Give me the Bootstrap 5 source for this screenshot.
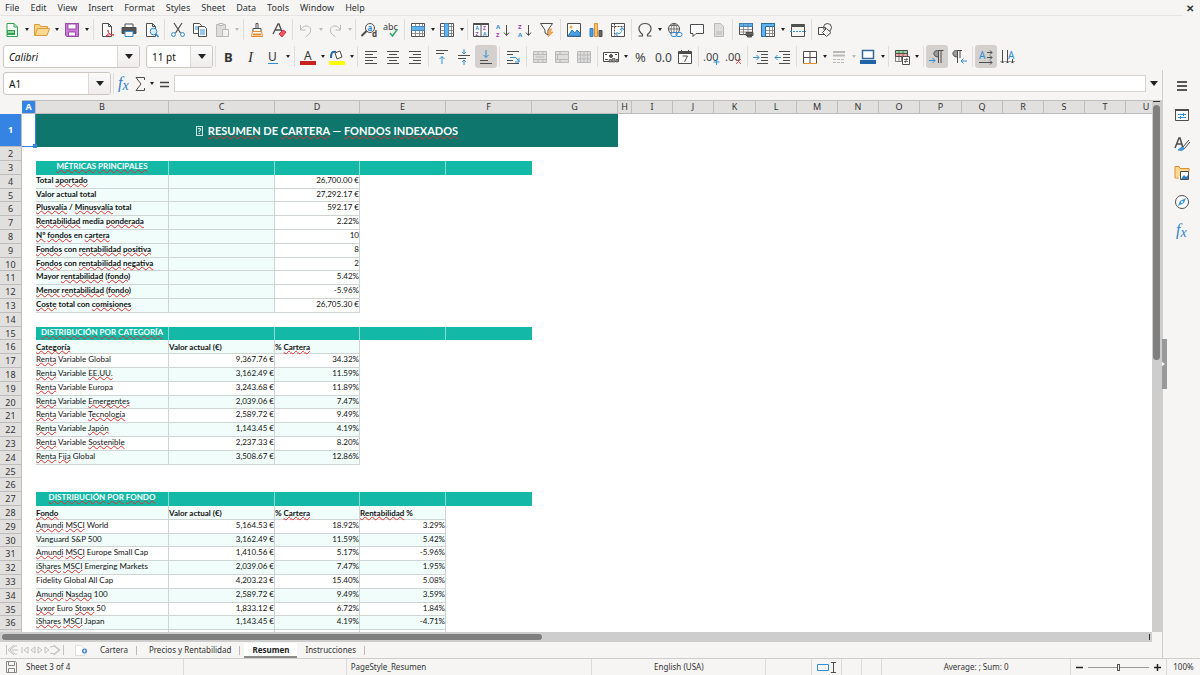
<!DOCTYPE html>
<html lang="en">
<head>
<meta charset="utf-8">
<meta name="viewport" content="width=device-width, initial-scale=1">
<title>Spreadsheet – Resumen</title>
<link href="https://cdn.jsdelivr.net/npm/bootstrap@5.3.0/dist/css/bootstrap.min.css" rel="stylesheet">
<style>
:root{--ui:#f6f5f4;--line:#d5d3d1;--ink:#2e3436;--mint:#f0fdfa;--teal:#14b8a6}
body{font:8px/14px "Noto Sans",sans-serif;background:var(--ui);color:var(--ink);height:100vh;overflow:hidden}
button{border:0;background:none;padding:0;color:inherit;font:inherit}
svg{display:block;fill:none;stroke:#4d4d4d;stroke-width:1;flex:none;overflow:visible}
.menubar{font-size:9px;height:16px;border-bottom:1px solid #e6e4e2;margin-right:17px;padding-left:5px;gap:11px}
.menubar a{color:var(--ink);text-decoration:none}
.close-x{top:1px;right:6px;font-weight:700;font-size:10px}
.tools{height:27px;padding-left:1px}
.tools svg,.side svg{width:16px;height:16px}
.tb{width:22px;height:23px;display:flex;align-items:center;justify-content:center;border-radius:3px;flex:none}
.slim .tb{width:16px}
.tb.on{background:#d3d0cd}
.dd{width:8px;height:23px;display:flex;align-items:center;justify-content:center;flex:none}
.dd.tight{width:7px}
.dd::before,.pick::before{content:"";border:2px solid transparent;border-top:3px solid #222;border-bottom:0}
.dd.off::before{border-top-color:#bbb}
.pick::before{border-width:5px 4px 0}
.sep{width:1px;height:21px;background:#e0dedc;margin:0 2px;flex:none}
.combo{height:23px;border:1px solid #cdc7c2;border-radius:3px;background:#fff;flex:none;overflow:hidden}
.combo input{border:0;padding:0 5px;min-width:0;flex:1;outline:0;background:none;color:#111;font-size:10px}
.combo .pick{width:22px;border-left:1px solid #dcd8d4;background:linear-gradient(#fbfafa,#eeedec)}
.pick{display:flex;align-items:center;justify-content:center}
.w-font{width:137px;margin-left:2px;margin-right:6px}.w-size{width:67px}.w-name{width:108px;margin-left:2px}
.formula{height:17px;border:1px solid #d8d4d0;background:#fff;min-width:0;outline:0;margin-left:2px}
.sheet{min-width:0;min-height:0}
.board{margin-top:3px}
.cells{background:#fff;overflow:hidden;min-height:0;min-width:0}
.gridt{table-layout:fixed;border-collapse:separate;border-spacing:0;width:1167px;font-family:Lato,sans-serif;font-size:8px;line-height:12px;color:#111}
.gridt th,.gridt td{padding:0;white-space:nowrap;height:14px;vertical-align:middle}
.gridt tbody td{line-height:11px;vertical-align:top}
.gridt tbody tr:nth-child(5n) :is(th,td){height:13px;line-height:11px}
.gridt tbody tr:first-child :is(th,td){height:33px;vertical-align:middle}
.gridt thead th,.gridt tbody th{font:400 8px/12px "Noto Sans",sans-serif;color:#333;background:#e1e0df;text-align:center;border:0 solid #bfbdbb;border-width:0 1px 1px 0}
.gridt thead th{border-top:1px solid #bfbdbb;font-size:9px}
.gridt tbody th{font-size:9px}
.gridt thead th:first-child{background:var(--ui);border-color:var(--ui)}
.gridt .cur{background:#3584e4!important;color:#fff!important;font-weight:700!important}
.gridt .bx{border:0 solid #cfd5d5;border-width:0 1px 1px 0}
.gridt .mint{background:var(--mint)}
.gridt .sect{background:var(--teal);color:#fff;font-weight:700;text-align:center;border:0 solid #8adcd3;border-width:0 1px 0 0}
.gridt .sect.end{border:0}
.gridt .ttl{background:#0f766e;color:#fff;font-weight:700;font-size:11px;line-height:16px;text-align:center}
.gridt .num{text-align:right}
.gridt tbody .low{vertical-align:bottom}
.a1{border:solid #3584e4;border-width:0 1px 1px 0!important;position:relative}
.a1::after{content:"";position:absolute;right:-2px;bottom:-2px;width:4px;height:4px;background:#3584e4}
.sp{text-decoration:underline wavy #e03030 1px;text-underline-offset:0;text-decoration-skip-ink:none}
.tofu{border:1px solid #cfe4e2;font-size:8px;line-height:8px;display:inline-block;width:7px;margin-right:5px;vertical-align:1px}
.vbar{width:10px;background:#cdcdcd;padding:1px 2px 0 1px}
.vbar i{display:block;background:#7f7f7f;border-radius:4px;height:48%;margin-top:3px}
.vbar b{display:block;height:1px;background:#333}
.hbar{height:10px;background:#cdcdcd;padding:2px;margin-right:10px}
.hbar i{width:47%;height:6px;background:#7f7f7f;border-radius:3px}
.hbar b{width:1px;height:6px;background:#333}
.side{width:38px;border-left:1px solid #d0cecc;position:relative}
.side .rail{gap:6px;padding-top:4px}
.grip{position:absolute;left:-1px;top:50%;width:5px;height:50px;margin-top:-25px;background:#999;display:flex;align-items:center}
.grip::before{content:"";border:2px solid transparent;border-left:3px solid #fff;border-right:0}
.tabs{height:16px}
.tabs a{color:#333;text-decoration:none;height:15px}
.tabs .cut{width:1px;height:9px;background:#bbb}
.tabs .act{background:#fff;font-weight:700;border-bottom:2px solid #8b8b8b;padding:0 8px;color:#222}
.status{height:17px;border-top:1px solid #cfcdcb;display:grid;grid-template-columns:184fr 163fr 246fr 174fr 46fr 30px 20px 20px 189fr 96px 33px;color:#333}
.status>div{border-right:1px solid #dddbd9;display:flex;align-items:center;min-width:0;white-space:nowrap}
.status>div:last-child{border:0}
.zoomer{appearance:none;flex:1;min-width:0;height:10px;background:linear-gradient(#999,#999) center/100% 1px no-repeat}
.zoomer::-webkit-slider-thumb{appearance:none;width:3px;height:7px;background:#eee;border:1px solid #555}
.bl{stroke:#2f8fd6}.gy{stroke:#b5b5b5}
</style>
<script src="https://cdn.jsdelivr.net/npm/bootstrap@5.3.0/dist/js/bootstrap.bundle.min.js"></script>
</head>
<body class="d-flex flex-column">
<nav class="menubar d-flex align-items-center flex-shrink-0" aria-label="Menu">
<a href="#">File</a><a href="#">Edit</a><a href="#">View</a><a href="#">Insert</a><a href="#">Format</a><a href="#">Styles</a><a href="#">Sheet</a><a href="#">Data</a><a href="#">Tools</a><a href="#">Window</a><a href="#">Help</a>
<button class="close-x position-absolute" aria-label="Close">✕</button>
</nav>
<div class="tools d-flex align-items-center flex-shrink-0" id="bar1"></div>
<div class="tools d-flex align-items-center flex-shrink-0">
<div class="combo w-font d-flex"><input aria-label="Font name" value="Calibri" class="fst-italic"><button class="pick" aria-label="Fonts"></button></div>
<div class="combo w-size d-flex"><input aria-label="Font size" value="11 pt"><button class="pick" aria-label="Sizes"></button></div>
<div class="d-flex align-items-center" id="bar2"></div>
</div>
<div class="d-flex flex-grow-1 sheet">
<main class="d-flex flex-column flex-grow-1 sheet">
<div class="tools d-flex align-items-center flex-shrink-0">
<div class="combo w-name d-flex"><input aria-label="Name box" value="A1"><button class="pick" aria-label="Names"></button></div>
<div class="d-flex align-items-center slim" id="bar3"></div>
<input class="formula flex-grow-1" aria-label="Formula"><button class="pick px-1" aria-label="Expand formula bar"></button>
</div>
<div class="board d-flex flex-grow-1 sheet">
<div class="cells flex-grow-1"><table class="gridt"><colgroup id="cols"></colgroup><thead><tr id="heads"></tr></thead><tbody id="rows"></tbody></table></div>
<div class="vbar"><b></b><i></i></div>
</div>
<div class="hbar d-flex justify-content-between flex-shrink-0"><i></i><b></b></div>
<div class="tabs d-flex align-items-center flex-shrink-0">
<svg width="60" height="12" viewBox="0 0 60 12" class="ms-1 me-2 gy"><path d="M2.500 1v10M13 2h-2L6 6l5 4h2M4 6l6-5M4 6l6 5M8 6h6M18 3v6M24 3l-4 3 4 3zM31 3l-4 3 4 3zM34 3l4 3-4 3zM41 3l4 3-4 3zM50 1l6 5-6 5M46 3l4-1 5 4-5 4-4-1M59.500 1v10" stroke-width=".8"/></svg>
<button aria-label="Add sheet" class="me-2"><svg width="16" height="13" viewBox="0 0 16 13"><path d="M3.500 1.500h6l3 3v7h-9z" fill="#fff" stroke="#ddd"/><circle cx="12.500" cy="7" r="2.500" fill="#3b78c8" stroke="none"/><path d="M12.500 5.500v3M11 7h3" stroke="#fff" stroke-width=".8"/></svg></button>
<a href="#" class="ms-1">Cartera</a><span class="cut ms-2 me-2"></span><a href="#" class="ms-1">Precios y Rentabilidad</a><span class="cut ms-2 me-1"></span><a href="#" class="act">Resumen</a><a href="#" class="ms-2">Instrucciones</a><span class="cut ms-2"></span>
</div>
</main>
<aside class="side flex-shrink-0"><div class="grip"></div><div class="rail d-flex flex-column align-items-center" id="rail"></div></aside>
</div>
<footer class="status flex-shrink-0">
<div class="ps-1"><svg width="14" height="12" viewBox="0 0 14 12" class="me-2"><path d="M2.500.500h9l1 1v10h-10zM4.500.500v4h6v-4M4.500 11.500v-4h6v4" stroke="#888"/></svg>Sheet 3 of 4</div><div></div><div class="ps-1">PageStyle_Resumen</div><div class="justify-content-center">English (USA)</div><div></div>
<div class="justify-content-center"><svg width="20" height="12" viewBox="0 0 20 12"><path d="M.500 3.500h11v6H.500z" class="bl"/><path d="M14 1.500h5M14 11.500h5M16.500 1.500v10"/></svg></div><div></div><div></div>
<div class="justify-content-center">Average: ; Sum: 0</div>
<div class="px-1"><button aria-label="Zoom out"><svg width="9" height="9" viewBox="0 0 9 9"><path d="M1 4.500h7" stroke="#222" stroke-width="1.500"/></svg></button><input type="range" class="zoomer mx-1" aria-label="Zoom"><button aria-label="Zoom in"><svg width="9" height="9" viewBox="0 0 9 9"><path d="M1 4.500h7M4.500 1v7" stroke="#222" stroke-width="1.500"/></svg></button></div>
<div class="justify-content-center">100%</div>
</footer>
<script>
const B='stroke="#2f8fd6"', G='stroke="#b9b9b9"';
const doc='<path d="M3.5 1.500h6l3 3v10h-9z" fill="#fff"/><path d="M9.500 1.500v3h3"/>';
const t=(x,y,s,c,ch,w)=>`<text x="${x}" y="${y}" font-size="${s}" fill="${c}" stroke="none" font-family="Noto Sans" font-weight="${w||400}">${ch}</text>`;
const table='<path d="M1.500 1.500h13v13h-13z" fill="#fff"/><path d="M1.500 4.500h13M1.500 8.500h13M1.500 11.500h13M5.500 1.500v13M9.500 1.500v13M12.500 1.500v13" stroke="#777" stroke-width=".800"/>';
const merge=`<path d="M1.500 2.500h13v11h-13z" fill="#dedede" ${G}/>`;
const icons={
New:'<path d="M3 1.500h7l3.500 3.500v9.500H3z" fill="#fff" stroke="#2ea44f"/><path d="M10 1.500v3.500h3.500" stroke="#2ea44f"/><path d="M3 8h8v5H3z" fill="#2ea44f" stroke="none"/><path d="M4 10h6" stroke="#fff"/>',
Open:'<path d="M.500 13.500v-11h5l1 2h7v2" fill="#f9d58a" stroke="#e09a3a"/><path d="M1 13.500 3.500 6.500h12l-2.500 7z" fill="#fbd991" stroke="#e09a3a"/>',
Save:'<path d="M1.500 1.500h13v13h-12l-1-1z" fill="#c77dd1" stroke="#9b4aa8"/><path d="M4 2h8v5H4zM4.500 10h7v4h-7z" fill="#fff" stroke="#9b4aa8"/>',
PDF:doc+'<path d="M7 14c3-2 3-5 2-6-1 2 2 5 6 5-3-1-6 0-8 1z" stroke="#df3a44"/>',
Print:'<path d="M4 5V2h8v3" fill="#fff"/><path d="M1 5.500h14v6H1z" fill="#555"/><path d="M4 9.500h8v5H4z" fill="#fff" stroke="#2f8fd6"/>',
Preview:doc+`<circle cx="10.500" cy="9.500" r="3.300" fill="#dbeeff" ${B}/><path d="m13 12 2.500 3" ${B} stroke-width="1.500"/>`,
Cut:`<path d="M4 1l6.500 10M12 1 5.500 11" stroke-width="1.200"/><circle cx="3.500" cy="12.500" r="2" ${B}/><circle cx="12.500" cy="12.500" r="2" ${B}/>`,
Copy:`<path d="M1.500 1.500h6l2 2v8h-8z" fill="#fff"/><path d="M3 5h4M3 7h4" ${B}/><path d="M6.500 4.500h6l2 2v8h-8z" fill="#fff"/><path d="M8 8h5M8 10h5M8 12h5" ${B}/>`,
Paste:`<path d="M2.500 2.500h9v12h-9z" fill="#ddd" ${G}/><path d="M5 1.500h4v2H5zM8.500 7.500h6v7h-6z" fill="#f2f2f2" ${G}/>`,
Clone:'<path d="M7 1.500h2v5H7zM4 6.500h8v3H4z" fill="#fff"/><path d="M3.500 9.500h9l1 5h-11z" fill="#fff" stroke="#e58b2a"/><path d="M4 12.500h8" stroke="#e58b2a" stroke-width="2"/>',
Clear:'<path d="M2 12 7 2h1l3 8M4 8h6" stroke-width="1.300"/><path d="m8 12 4-4 3 2-4 5z" fill="#e8555f" stroke="#d5333f"/>',
Undo:`<path d="M2.500 3v5h5M2.500 8c3-6 11-5 10 1 0 3-3 4-5 6" ${G}/>`,
Redo:`<path d="M13.500 3v5h-5M13.500 8c-3-6-11-5-10 1 0 3 3 4 5 6" ${G}/>`,
Find:`<circle cx="9" cy="6" r="4.500"/><path d="m5.500 9-5 5" stroke-width="2"/>`+t(6.5,9,8,'#2f8fd6','a',700)+t(11,15,8,'#444','d',700),
Spelling:t(0,8,9,'#444','abc')+'<path d="m7 11 2.500 3 5-7" stroke="#2ea866" stroke-width="1.500"/>',
Row:table+'<path d="M1.500 4.500h13v4h-13z" fill="#5eb3f0" stroke="#3a7fb8" stroke-width=".800"/>',
Column:table+'<path d="M5.500 1.500h4v13h-4z" fill="#5eb3f0" stroke="#3a7fb8" stroke-width=".800"/>',
Sort:'<path d="M.500 1.500h15v13H.500zM8 2v13" fill="#fff"/><path d="M.500 2h15" stroke-width="2"/>'+t(2.5,8,5,'#2f8fd6','A',700)+t(2.5,14,5,'#a040b0','Z',700)+t(10,8,5,'#a040b0','Z',700)+t(10,14,5,'#2f8fd6','A',700),
Ascending:t(1,7,6,'#2f8fd6','A',700)+t(1,15,6,'#a040b0','Z',700)+'<path d="M11.500 3v10M9 10.500l2.500 3 2.500-3"/>',
Descending:t(1,7,6,'#a040b0','Z',700)+t(1,15,6,'#2f8fd6','A',700)+'<path d="M11.500 3v10M9 10.500l2.500 3 2.500-3"/>',
Filter:'<path d="M1.500 1.500h12L9 8v5l-3-2V8z" fill="#fff"/><path d="m11 7-3 4h2.500L9 15l5-5h-3l2-3z" fill="#f9b25a" stroke="#e58b2a" stroke-width=".600"/>',
Image:'<path d="M1.500 1.500h13v13h-13z" fill="#fff"/><path d="m2 14 4-6 3 3 2-3 3 3v3z" fill="#4a9fe0" stroke="#2f7fc0"/><circle cx="5" cy="5" r="1.500" fill="#f6a94a" stroke="none"/>',
Chart:'<path d="M2 6.500h3v8H2z" fill="#4a9fe0" stroke="#2f7fc0"/><path d="M6.500 1.500h3v13h-3z" fill="#f9c77a" stroke="#e58b2a"/><path d="M11 8.500h3v6h-3z" fill="#666"/>',
Pivot:`<path d="M1.500 1.500h13v13h-13z" fill="#fff"/><path d="M1.500 4.500h13M4.500 1.500v13" stroke-dasharray="2 1"/><path d="M6 12c5 0 6-2 6-6M7.500 10l-2 2 2 2M10 8l2-2.500L14 8" ${B}/>`,
Omega:'<path d="M1.500 14h4v-1.500C-1 7 2.500 1.500 8 1.500S17 7 10.500 12.500V14h4" stroke-width="1.200"/>',
Link:`<circle cx="7" cy="7" r="5.500"/><path d="M1.500 7h11M7 1.500v11M3 3.500h8M3 10.500h8M7 1.500c-4 3-4 8 0 11M7 1.500c4 3 4 8 0 11" stroke-width=".700"/><rect x="4" y="10.500" width="6" height="4" rx="2" fill="#f6f5f4" ${B}/><rect x="9" y="10.500" width="6" height="4" rx="2" ${B}/>`,
Comment:'<path d="M1.500 2.500h13v9H7l-3 3v-3H1.500z" fill="#fff"/>',
Headers:`<path d="M3.500 1.500h6l3 3v10h-9z" fill="#ddd" ${G}/><path d="M5 10h6M5 12h6" ${G}/>`,
Area:'<path d="M1.500 1.500h13v11h-13z" fill="#fff"/><path d="M1.500 1.500h13v3h-13z" fill="#5eb3f0" stroke="#3a7fb8"/><path d="M1.500 7.500h13M1.500 10h13M5.500 1.500v11M10 1.500v11" stroke-width=".800" stroke="#777"/><path d="M8 10.500h7v3H8zM9.500 12h4v3h-4z" fill="#777"/>',
Freeze:table+'<path d="M1.500 1.500h13v3h-9v10h-4z" fill="#5eb3f0" stroke="#2a6ca5"/>',
Split:`<path d="M1.500 2.500h13v2h-13z" fill="#555"/><path d="M1.500 5v9.500h13V5"/><path d="M0 9.500h16" ${B} stroke-dasharray="2 1"/>`,
Shapes:'<path d="M1.500 5.500h7v7h-7z"/><circle cx="10.500" cy="5.500" r="4"/><path d="m9.500 6.500 4.500 4-4.500 4-4-4z" fill="#f6f5f4"/>',
Colour:t(4,11,12,'#333','A')+'<path d="M0 14h16" stroke="#c9211e" stroke-width="4"/>',
Fill:`<path d="m6 4 5-2 2 6-5 2z" fill="#fff"/><path d="M2 9c0-5 1-7 5-6" stroke="#256aa8" stroke-width="2"/><path d="M0 14h16" stroke="#ff0" stroke-width="4"/>`,
Left:'<path d="M2 2.500h12M2 5.500h8M2 8.500h12M2 11.500h8M2 14.500h12"/>',
Centre:'<path d="M2 2.500h12M4 5.500h8M2 8.500h12M4 11.500h8M2 14.500h12"/>',
Right:'<path d="M2 2.500h12M6 5.500h8M2 8.500h12M6 11.500h8M2 14.500h12"/>',
Top:`<path d="M2 1.500h12M2 4.500h8"/><path d="M8 15V7.500M5.500 10 8 7.500l2.500 2.500" ${B}/>`,
Middle:`<path d="M2 6.500h12M2 9.500h8"/><path d="M8 0v5M6 3l2 2 2-2M8 16v-5M6 13l2-2 2 2" ${B}/>`,
Bottom:`<path d="M2 11.500h8M2 14.500h12"/><path d="M8 1v7.500M5.500 6 8 8.500 10.500 6" ${B}/>`,
Wrap:`<path d="M2 2.500h12M2 5.500h6M2 11.500h6M2 14.500h12"/><path d="M5 8.500h6l3 4M14 9v4h-4" ${B}/>`,
Merge:merge+`<path d="M1.500 5.500h13M1.500 10.500h13M6 2.500v3M11 2.500v3M6 10.500v3M11 10.500v3M4 8h8" ${G}/>`,
MergeCells:merge+`<path d="M1.500 5.500h13M1.500 10.500h13M6 2.500v3M6 10.500v3M3.500 5.500v5" ${G}/>`,
Unmerge:merge+`<path d="M1.500 6h13M1.500 10h13M4.500 2.500v11M8 2.500v11M11.500 2.500v11" ${G}/>`,
Currency:'<path d="M.500 3.500h15v9H.500z" fill="#fff"/><circle cx="8" cy="7" r="1.500" fill="#555"/><path d="M2 5.500h2M12 5.500h2M2 10.500h3"/><path d="M6 13v-2.500h2.500V13zM9.500 13V9.500H12V13zM13 13v-2.500h2V13z" fill="#999" stroke-width=".700"/>',
Date:'<path d="M1.500 2.500h13v12h-13z" fill="#fff"/><path d="M1.500 4h13" stroke-width="2"/><path d="M4.500 1v3M11.500 1v3M5.500 7h5l-3 6"/>',
Indent:`<path d="M4 2.500h11M8 5.500h7M8 8.500h7M8 11.500h7M4 14.500h11"/><path d="M0 8.500h6M3.500 6 6 8.500 3.500 11" ${B}/>`,
Outdent:`<path d="M4 2.500h11M8 5.500h7M8 8.500h7M8 11.500h7M4 14.500h11"/><path d="M0 8.500h6M2.500 6 0 8.500 2.500 11" ${B}/>`,
Borders:'<path d="M1.500 14.500v-12h13v12M8 2.500v12M1.500 8.500h13" fill="#fff"/><path d="M1 14.500h14" stroke="#e58b2a"/>',
Style:`<path d="M2 3h12M2 6.500h12" ${G} stroke-width="2"/><path d="M2 10.500h12M2 13.500h12" ${G} stroke-dasharray="3 1"/>`,
BorderColour:'<path d="M2.500 1.500h11v8h-11z" fill="#fff" stroke="#35699b" stroke-width="1.500"/><path d="M0 13h16" stroke="#1f63a8" stroke-width="4"/>',
Conditional:'<path d="M1.500 1.500h12v3h-12z" fill="#8fdc9a"/><path d="M1.500 4.500h12v3h-12z" fill="#f3a3a3"/><path d="M1.500 7.500h6v5h-6zM5 1.500v11M9 1.500v6" stroke-width=".700"/><path d="M8.500 7.500h7v8h-7z" fill="#fff"/><path d="M10 10.500h4M10 12.500h4M13 9l-2 5" stroke-width=".800"/>',
LTR:`<path d="M9.500 2H8C4 2 4 8 8 8h1.500z" fill="#999" stroke="none"/><path d="M14.500 1.500H8.500c-5 0-5 6.500 1 6.500M9.500 1.500V14M12 1.500V14"/><path d="M0 11.500h6M3.500 9 6 11.500 3.500 14" ${B}/>`,
RTL:`<path d="M6.500 2H5C1 2 1 8 5 8h1.500z" fill="#999" stroke="none"/><path d="M11 1.500H5.500c-5 0-5 6.500 1 6.500M6.500 1.500V14M9 1.500V9"/><path d="M10 12h6M12.500 9.500 10 12l2.500 2.500" ${B}/>`,
Horizontal:t(1,10,10,'#2f8fd6','A')+'<path d="M9 3.500h5M12 1.500l2 2-2 2M9 8.500h5M12 6.500l2 2-2 2M1 13.500h13M12 11.500l2 2-2 2"/>',
Vertical:t(8,10,10,'#2f8fd6','A')+'<path d="M2.500 1v13M.500 12l2 2 2-2M7.500 1v13M5.500 12l2 2 2-2M12.500 10v4M10.500 12l2 2 2-2"/>',
Menu:'<path d="M3 4h10M3 8h10M3 12h10" stroke="#222" stroke-width="1.500"/>',
Properties:`<path d="M1.500 2.500h13v11h-13z" fill="#fff"/><path d="M1 3h14" stroke-width="2"/><path d="M4 7.500h8M4 10.500h8M9.500 6v3M6.500 9v3" ${B}/>`,
Styles:`<path d="M1 12 5 2h1l3 10M3 8h5" stroke-width="1.500"/><path d="m15 4-7 8 2 1 6-7" fill="#fff"/><path d="M4 14c4 1 6 0 6-2l-2-1z" fill="#4a9fe0" ${B}/>`,
Gallery:'<path d="M1 13V1.500h4l1 2h9v3M1 13h4" fill="#fbd991" stroke="#e58b2a"/><path d="M6.500 6.500h8v8h-8z" fill="#fff"/><path d="m7 14 3-4 2 2 2-2v4z" fill="#2f7fc0" stroke="none"/>',
Navigator:`<circle cx="8" cy="8" r="6.500" fill="#fff"/><path d="m12 4-2 5-6 3 2-5z" fill="#3c97dc" stroke="none"/><circle cx="8" cy="8" r="1" fill="#fff" stroke="none"/>`,
Sum:'<path d="M12.500 4V1.500H4l5 6.500-5 6.500h8.500V12"/>',
Equals:'<path d="M4 6.500h9M4 10.500h9" stroke="#444" stroke-width="1.500"/>',
Bold:t(3,13,13,'#333','B',700),
Italic:'<text x="5" y="13" font-size="15" font-style="italic" font-family="Liberation Serif" fill="#333" stroke="none">I</text>',
Underline:t(3,12,12,'#333','U')+'<path d="M3 14.500h10" stroke="#2f8fd6"/>',
Percent:t(2,13,13,'#444','%'),Number:t(0,13,12,'#444','0.0'),
AddDecimal:t(-1,12,11,'#444','.00')+'<path d="M9.500 13h6M12.500 10v6" stroke="#2f8fd6"/>',
DeleteDecimal:t(-1,12,11,'#444','.00')+'<path d="m10 10 5 5M15 10l-5 5" stroke="#e05050"/>',
Function:'<text x="2" y="12" font-size="16" font-style="italic" font-family="Liberation Serif" fill="#2f83c8" stroke="none">f<tspan font-size="14" dy="2">x</tspan></text>'
};
// "|" is a separator, "v" a drop-down arrow, "w" a narrow one, "!" a disabled one, "*" marks a pressed button
const bar=(id,list)=>document.getElementById(id).innerHTML=list.split(' ').map(n=>{
 if(n==='|')return '<span class="sep"></span>';
 if(/^[vw]!?$/.test(n))return `<button class="dd${n[0]==='w'?' tight':''}${n[1]?' off':''}" aria-label="More"></button>`;
 const on=n.endsWith('*'),k=n.replace('*','');
 return `<button class="tb${on?' on':''}" aria-label="${k}"><svg viewBox="0 0 16 16">${icons[k]}</svg></button>`}).join('');
bar('bar1','New v Open v Save v | PDF Print Preview | Cut Copy Paste v! | Clone Clear | Undo w! Redo w! | Find Spelling | Row w Column w | Sort Ascending Descending Filter | Image Chart Pivot | Omega v Link Comment Headers | Area Freeze v Split | Shapes');
bar('bar2','| Bold Italic Underline v | Colour w Fill w | Left Centre Right | Top Middle Bottom* | Wrap | Merge MergeCells Unmerge | Currency v Percent Number Date | AddDecimal DeleteDecimal | Indent Outdent | Borders w Style w! BorderColour w | Conditional v | LTR* RTL | Horizontal* Vertical');
bar('bar3','| Function Sum v Equals');
bar('rail','Menu Properties Styles Gallery Navigator Function');

const widths=[22,14,133,106,85,86,86,86,14,41,41,42,41,41,41,41,42,41,41,41,41,41];
cols.innerHTML=widths.map(w=>`<col style="width:${w}px">`).join('');
heads.innerHTML='<th></th>'+[...'ABCDEFGHIJKLMNOPQRSTU'].map(c=>`<th${c==='A'?' class="cur"':''}>${c}</th>`).join('');
const spell=s=>s.replace(/~(.+?)~/g,'<span class="sp">$1</span>');
const sect=s=>`<td class="sect">${spell(s)}</td>`+'<td class="sect"></td>'.repeat(3)+'<td class="sect end"></td>';
const head=a=>a.map(s=>`<td class="bx mint low fw-bold">${spell(s)}</td>`).join('');
const line=(a,m)=>a.map((s,i)=>`<td class="bx ${m?'mint':''} ${i?'num':''}">${spell(s)}</td>`).join('');
const r={};
r[3]=sect('~MÉTRICAS~ ~PRINCIPALES~');
[['Total ~aportado~','26,700.00 €'],['Valor actual total','27,292.17 €'],['~Plusvalía~ / ~Minusvalía~ total','592.17 €'],['~Rentabilidad~ media ~ponderada~','2.22%'],['~Nº~ ~fondos~ en ~cartera~','10'],['~Fondos~ con ~rentabilidad~ ~positiva~','8'],['~Fondos~ con ~rentabilidad~ ~negativa~','2'],['Mayor ~rentabilidad~ (~fondo~)','5.42%'],['~Menor~ ~rentabilidad~ (~fondo~)','-5.96%'],['~Coste~ total con ~comisiones~','26,705.30 €']]
.forEach(([k,v],i)=>r[4+i]=`<td class="bx mint fw-bold">${spell(k)}</td><td class="bx mint"></td><td class="bx num">${v}</td>`);
r[15]=sect('~DISTRIBUCIÓN~ ~POR~ ~CATEGORÍA~');
r[16]=head(['~Categoría~','Valor actual (€)','% ~Cartera~']);
[['~Renta~ Variable Global','9,367.76 €','34.32%'],['~Renta~ Variable ~EE.UU.~','3,162.49 €','11.59%'],['~Renta~ Variable Europa','3,243.68 €','11.89%'],['~Renta~ Variable ~Emergentes~','2,039.06 €','7.47%'],['~Renta~ Variable ~Tecnología~','2,589.72 €','9.49%'],['~Renta~ Variable ~Japón~','1,143.45 €','4.19%'],['~Renta~ Variable ~Sostenible~','2,237.33 €','8.20%'],['~Renta~ ~Fija~ Global','3,508.67 €','12.86%']]
.forEach((a,i)=>r[17+i]=line(a,i%2));
r[27]=sect('~DISTRIBUCIÓN~ ~POR~ ~FONDO~');
r[28]=head(['~Fondo~','Valor actual (€)','% ~Cartera~','~Rentabilidad~ %']);
[['~Amundi~ ~MSCI~ World','5,164.53 €','18.92%','3.29%'],['Vanguard S&amp;P 500','3,162.49 €','11.59%','5.42%'],['~Amundi~ ~MSCI~ Europe Small Cap','1,410.56 €','5.17%','-5.96%'],['~iShares~ ~MSCI~ Emerging Markets','2,039.06 €','7.47%','1.95%'],['Fidelity Global All Cap','4,203.23 €','15.40%','5.08%'],['~Amundi~ ~Nasdaq~ 100','2,589.72 €','9.49%','3.59%'],['~Lyxor~ Euro ~Stoxx~ 50','1,833.12 €','6.72%','1.84%'],['~iShares~ ~MSCI~ Japan','1,143.45 €','4.19%','-4.71%'],['','','','']]
.forEach((a,i)=>r[29+i]=line(a,i%2));
let out='<tr><th class="cur">1</th><td class="a1"></td><td class="ttl" colspan="6"><span class="tofu">?</span>'+spell('~RESUMEN~ DE ~CARTERA~ — ~FONDOS~ ~INDEXADOS~')+'</td></tr>';
for(let n=2;n<38;n++)out+=`<tr><th>${n<37?n:''}</th><td></td>${r[n]||''}</tr>`;
rows.innerHTML=out;
</script>
</body>
</html>
